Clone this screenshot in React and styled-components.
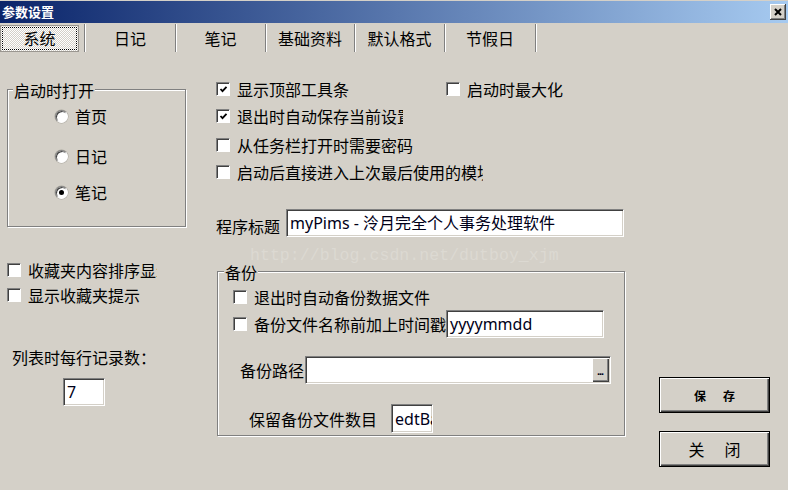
import { createGlobalStyle, styled } from "styled-components";

const GlobalStyle = createGlobalStyle`
  html, body { margin: 0; padding: 0; background: #d4d0c8; }
  body {
    font-family: "Noto Sans CJK SC", "Noto Sans", sans-serif;
    font-size: 16px;
    color: #000;
  }
  * { box-sizing: border-box; }
`;

const Dialog = styled.div`
  position: relative;
  width: 788px;
  height: 490px;
  overflow: hidden;
  display: flex;
  flex-direction: column;
  background: #d4d0c8;
`;

const TitleBar = styled.div`
  height: 23px;
  flex: none;
  border-top: 1px solid #d4d0c8;
  background: linear-gradient(90deg, #0a246a 0%, #a6caf0 100%);
  display: flex;
  align-items: center;
  justify-content: space-between;
  padding: 0 2px;
`;

const TitleText = styled.span`
  color: #fff;
  font-size: 13px;
  font-weight: 700;
  line-height: 16px;
`;

const CloseButton = styled.div`
  width: 16px;
  height: 16px;
  background: #d4d0c8;
  box-shadow: inset -1px -1px #404040, inset 1px 1px #fff, inset -2px -2px #808080;
  display: flex;
  align-items: center;
  justify-content: center;
`;

const TabBar = styled.div`
  height: 30px;
  flex: none;
  display: flex;
  align-items: stretch;
  padding: 1px 0 1px;
`;

const Tab = styled.div`
  width: ${(p) => p.$w}px;
  flex: none;
  display: flex;
  align-items: center;
  justify-content: center;
  padding-right: 2px;
  border-right: 1px solid #fff;
  box-shadow: inset -1px 0 #808080;
  line-height: 18px;
`;

const SelectedFace = styled.div`
  width: 80px;
  height: 27px;
  margin-right: 4px;
  display: flex;
  align-items: center;
  justify-content: center;
  border: 1px solid #9a9690;
  outline: 1px dotted #000;
  outline-offset: -3px;
  background: repeating-conic-gradient(#fff 0 25%, #d4d0c8 0 50%) 0 0 / 2px 2px;
`;

const Body = styled.div`
  flex: 1;
  display: flex;
  padding-left: 7px;
`;

const LeftCol = styled.div`
  width: 209px;
  flex: none;
  display: flex;
  flex-direction: column;
`;

const RightCol = styled.div`
  width: 409px;
  flex: none;
  display: flex;
  flex-direction: column;
`;

const ButtonCol = styled.div`
  margin-left: 34px;
  display: flex;
  flex-direction: column;
  justify-content: flex-end;
  gap: 18px;
  padding-bottom: 23px;
`;

const Group = styled.div`
  position: relative;
  width: ${(p) => p.$w}px;
  height: ${(p) => p.$h}px;
  margin-top: ${(p) => p.$top}px;
  margin-left: ${(p) => p.$left || 0}px;
  border: 1px solid #808080;
  box-shadow: inset 1px 1px #fff, 1px 1px #fff;
  display: flex;
  flex-direction: column;
  padding: ${(p) => p.$pad};
`;

const Caption = styled.span`
  position: absolute;
  top: -9px;
  left: ${(p) => p.$left}px;
  padding: 0 1px;
  background: #d4d0c8;
  line-height: 18px;
`;

const Row = styled.div`
  display: flex;
  align-items: center;
  height: ${(p) => p.$h || 18}px;
  margin-top: ${(p) => p.$top || 0}px;
  margin-left: ${(p) => p.$left || 0}px;
  line-height: 18px;
  white-space: nowrap;
`;

const CheckGrid = styled.div`
  display: grid;
  grid-template-columns: ${(p) => (p.$single ? "1fr" : "230px auto")};
  height: 18px;
  margin-top: ${(p) => p.$top}px;
`;

const CheckItem = styled.label`
  display: flex;
  align-items: center;
  gap: 7px;
  line-height: 18px;
  white-space: nowrap;
`;

const CheckText = styled.span`
  display: block;
  overflow: hidden;
  width: ${(p) => (p.$w ? `${p.$w}px` : "auto")};
`;

const Box = styled.span`
  width: 14px;
  height: 14px;
  flex: none;
  background: #fff;
  border: 1px solid;
  border-color: #808080 #fff #fff #808080;
  box-shadow: inset 1px 1px #404040;
  display: flex;
  align-items: center;
  justify-content: center;
`;

const Radio = styled.span`
  width: 13px;
  height: 13px;
  flex: none;
  border-radius: 50%;
  background: #fff;
  border: 1px solid;
  border-color: #808080 #fff #fff #808080;
  box-shadow: inset 1px 1px #404040, 0 0 0 0.5px #a8a49c;
  display: flex;
  align-items: center;
  justify-content: center;
  margin-right: 7px;
  &::after {
    content: "";
    width: 5px;
    height: 5px;
    border-radius: 50%;
    background: ${(p) => (p.$on ? "#000" : "transparent")};
  }
`;

const Label = styled.span`
  line-height: 18px;
  white-space: nowrap;
  margin-right: ${(p) => p.$gap || 0}px;
  padding-top: ${(p) => p.$down || 0}px;
`;

const Field = styled.div`
  width: ${(p) => p.$w}px;
  height: ${(p) => p.$h || 28}px;
  flex: none;
  background: #fff;
  border: 1px solid;
  border-color: #808080 #fff #fff #808080;
  box-shadow: inset 1px 1px #404040, inset -1px -1px #d4d0c8;
  padding: 0 3px;
  display: flex;
  align-items: center;
  justify-content: space-between;
  overflow: hidden;
  white-space: nowrap;
  color: #000018;
  font-family: "Noto Sans", "Noto Sans CJK SC", sans-serif;
  font-size: 16px;
  line-height: 18px;
`;

const BrowseButton = styled.span`
  width: 17px;
  height: 24px;
  margin-right: -2px;
  flex: none;
  background: #d4d0c8;
  box-shadow: inset 1px 1px #fff, inset -1px -1px #404040, inset -2px -2px #808080;
  display: flex;
  align-items: center;
  justify-content: center;
  font-family: "Liberation Sans", sans-serif;
  font-size: 11px;
  font-weight: 700;
  line-height: 11px;
  letter-spacing: -1px;
  padding: 2px 1px 0 0;
`;

const DlgButton = styled.button`
  width: 111px;
  height: 36px;
  background: #d4d0c8;
  border: 1px solid #000;
  box-shadow: inset 1px 1px #fff, inset -1px -1px #404040, inset -2px -2px #808080;
  display: flex;
  align-items: center;
  justify-content: center;
  gap: ${(p) => (p.$small ? 17 : 20)}px;
  font-family: "Noto Sans CJK SC", sans-serif;
  font-size: ${(p) => (p.$small ? 12 : 16)}px;
  font-weight: ${(p) => (p.$small ? 700 : 400)};
  color: #000;
  padding: 0;
`;

const Watermark = styled.div`
  position: absolute;
  left: 250px;
  top: 246px;
  font-family: "Liberation Mono", monospace;
  font-size: 16.6px;
  line-height: 20px;
  color: #dcd9d2;
  pointer-events: none;
`;

function Check({ on, text, w }) {
  return (
    <CheckItem>
      <Box>
        {on && (
          <svg width="9" height="9" viewBox="0 0 9 9">
            <path d="M1.5 4 L3.5 6.2 L7.5 1.8" fill="none" stroke="#000" strokeWidth="1.8" />
          </svg>
        )}
      </Box>
      <CheckText $w={w}>{text}</CheckText>
    </CheckItem>
  );
}

const tabs = [
  { name: "日记", w: 91 },
  { name: "笔记", w: 90 },
  { name: "基础资料", w: 89 },
  { name: "默认格式", w: 90 },
  { name: "节假日", w: 91 },
];

export default function App() {
  return (
    <Dialog>
      <GlobalStyle />
      <TitleBar>
        <TitleText>参数设置</TitleText>
        <CloseButton>
          <svg width="8" height="8" viewBox="0 0 8 8">
            <path d="M1 1 L7 7 M7 1 L1 7" stroke="#000" strokeWidth="2" />
          </svg>
        </CloseButton>
      </TitleBar>

      <TabBar>
        <Tab $w={86}>
          <SelectedFace>系统</SelectedFace>
        </Tab>
        {tabs.map((t) => (
          <Tab key={t.name} $w={t.w}>
            {t.name}
          </Tab>
        ))}
      </TabBar>

      <Body>
        <LeftCol>
          <Group $w={179} $h={138} $top={36} $pad="17px 0 0 47px">
            <Caption $left={5}>启动时打开</Caption>
            <Row>
              <Radio />
              首页
            </Row>
            <Row $top={22}>
              <Radio />
              日记
            </Row>
            <Row $top={18}>
              <Radio $on />
              笔记
            </Row>
          </Group>
          <Row $top={34}>
            <Check text="收藏夹内容排序显示" w={129} />
          </Row>
          <Row $top={7}>
            <Check text="显示收藏夹提示" />
          </Row>
          <Row $top={44} $left={5}>
            列表时每行记录数：
          </Row>
          <Row $top={12} $left={56} $h={28}>
            <Field $w={42}>7</Field>
          </Row>
        </LeftCol>

        <RightCol>
          <CheckGrid $top={27}>
            <Check on text="显示顶部工具条" />
            <Check text="启动时最大化" />
          </CheckGrid>
          <CheckGrid $top={9} $single>
            <Check on text="退出时自动保存当前设置" w={166} />
          </CheckGrid>
          <CheckGrid $top={11} $single>
            <Check text="从任务栏打开时需要密码" />
          </CheckGrid>
          <CheckGrid $top={9} $single>
            <Check text="启动后直接进入上次最后使用的模块" w={246} />
          </CheckGrid>
          <Row $top={28} $h={28}>
            <Label $gap={6} $down={5}>程序标题</Label>
            <Field $w={338}>myPims - 泠月完全个人事务处理软件</Field>
          </Row>

          <Group $w={408} $h={165} $top={34} $left={1} $pad="16px 0 0 15px">
            <Caption $left={6}>备份</Caption>
            <Row>
              <Check text="退出时自动备份数据文件" />
            </Row>
            <Row $top={4} $h={28}>
              <Check text="备份文件名称前加上时间戳" w={192} />
              <Field $w={158}>yyyymmdd</Field>
            </Row>
            <Row $top={18} $h={28} $left={7}>
              <Label $gap={1}>备份路径</Label>
              <Field $w={306}>
                <span />
                <BrowseButton>...</BrowseButton>
              </Field>
            </Row>
            <Row $top={20} $h={29} $left={16}>
              <Label $gap={14}>保留备份文件数目</Label>
              <Field $w={42} $h={29}>edtBackup</Field>
            </Row>
          </Group>
        </RightCol>

        <ButtonCol>
          <DlgButton $small>
            <span>保</span>
            <span>存</span>
          </DlgButton>
          <DlgButton>
            <span>关</span>
            <span>闭</span>
          </DlgButton>
        </ButtonCol>
      </Body>

      <Watermark>http://blog.csdn.net/dutboy_xjm</Watermark>
    </Dialog>
  );
}
